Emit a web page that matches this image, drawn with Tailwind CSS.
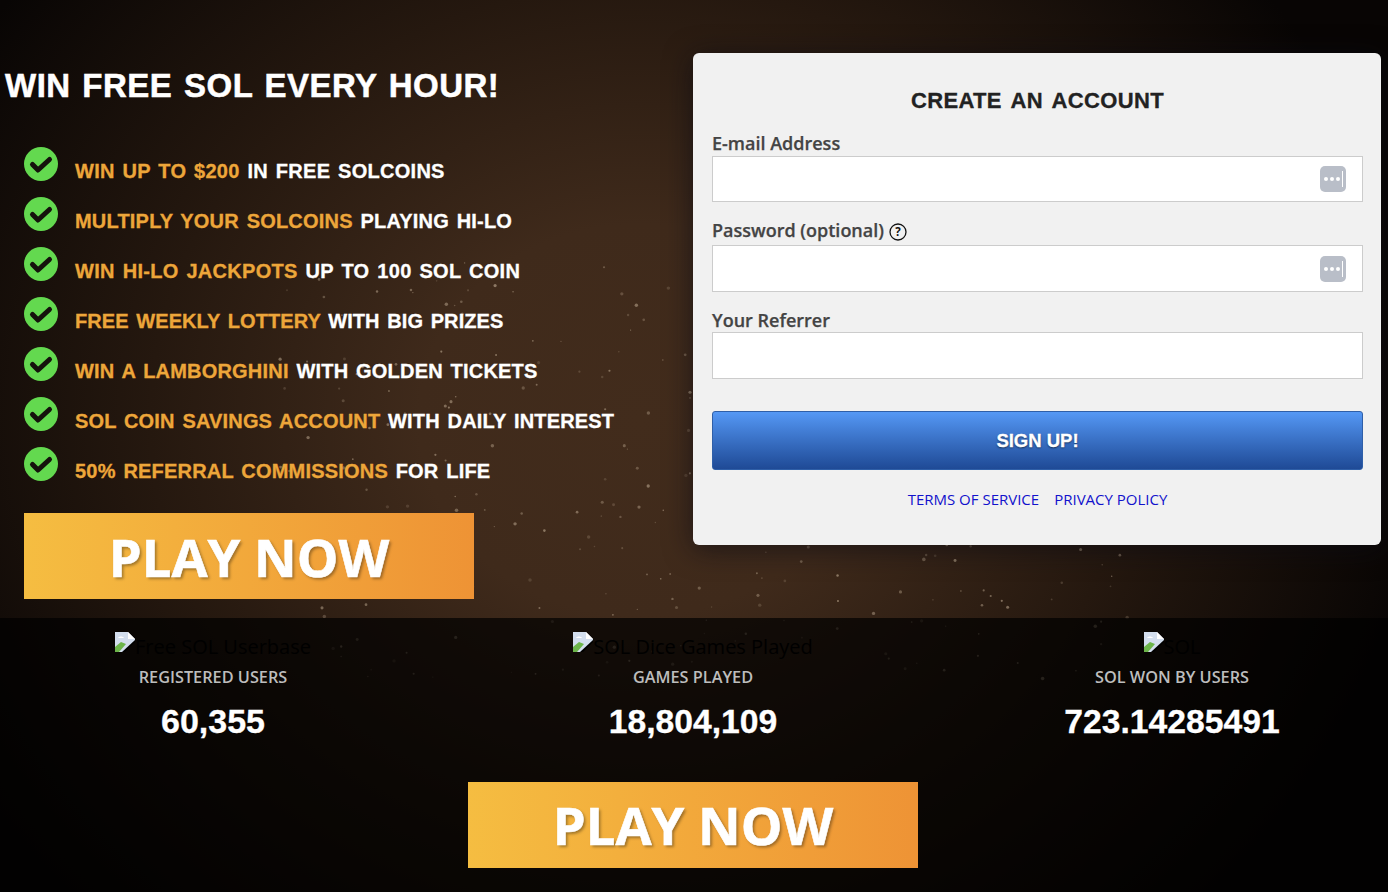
<!DOCTYPE html>
<html lang="en">
  <head>
    <meta charset="UTF-8">
    <title>Win Free SOL</title>
    <script src="https://cdn.jsdelivr.net/npm/@tailwindcss/browser@4"></script>
  </head>
  <body class="bg-black">
    <div class="relative w-[1388px] h-[892px] overflow-hidden bg-[radial-gradient(ellipse_790px_700px_at_640px_420px,#422c1c_0%,#3f2a1b_28%,#25180f_62%,#080504_100%)] font-['Open_Sans',sans-serif]">
      <!-- dust specks -->
      <svg id="specks" class="absolute inset-0" width="1388" height="892"></svg>

      <!-- hero -->
      <section class="relative h-[618px] flex">
        <div class="w-[693px] shrink-0">
          <h1 class="pl-[5px] pt-[66px] text-[33px] leading-[40px] font-bold text-white font-['Liberation_Sans',sans-serif] tracking-[0.5px] [word-spacing:2px] [-webkit-text-stroke:0.5px_white]">WIN FREE SOL EVERY HOUR!</h1>

          <ul class="pl-6 pt-[41px] flex flex-col gap-[16px] font-['Liberation_Sans',sans-serif] text-[20px] font-bold text-white tracking-[0.2px] [word-spacing:2px] [-webkit-text-stroke:0.3px]">
            <li class="flex h-[34px] gap-[17px]">
              <svg class="shrink-0" width="34" height="34" viewBox="0 0 34 34"><circle cx="17" cy="17" r="17" fill="#63d94f"/><path d="M8.5 17.5l5.5 5.5 11.5-10.5" fill="none" stroke="#15120d" stroke-width="5" stroke-linecap="round" stroke-linejoin="round"/></svg>
              <span class="pt-[11px] leading-[26px] whitespace-nowrap tracking-[0.27px]"><span class="text-[#eda63a]">WIN UP TO $200</span> IN FREE SOLCOINS</span>
            </li>
            <li class="flex h-[34px] gap-[17px]">
              <svg class="shrink-0" width="34" height="34" viewBox="0 0 34 34"><circle cx="17" cy="17" r="17" fill="#63d94f"/><path d="M8.5 17.5l5.5 5.5 11.5-10.5" fill="none" stroke="#15120d" stroke-width="5" stroke-linecap="round" stroke-linejoin="round"/></svg>
              <span class="pt-[11px] leading-[26px] whitespace-nowrap"><span class="text-[#eda63a]">MULTIPLY YOUR SOLCOINS</span> PLAYING HI-LO</span>
            </li>
            <li class="flex h-[34px] gap-[17px]">
              <svg class="shrink-0" width="34" height="34" viewBox="0 0 34 34"><circle cx="17" cy="17" r="17" fill="#63d94f"/><path d="M8.5 17.5l5.5 5.5 11.5-10.5" fill="none" stroke="#15120d" stroke-width="5" stroke-linecap="round" stroke-linejoin="round"/></svg>
              <span class="pt-[11px] leading-[26px] whitespace-nowrap tracking-[0.3px]"><span class="text-[#eda63a]">WIN HI-LO JACKPOTS</span> UP TO 100 SOL COIN</span>
            </li>
            <li class="flex h-[34px] gap-[17px]">
              <svg class="shrink-0" width="34" height="34" viewBox="0 0 34 34"><circle cx="17" cy="17" r="17" fill="#63d94f"/><path d="M8.5 17.5l5.5 5.5 11.5-10.5" fill="none" stroke="#15120d" stroke-width="5" stroke-linecap="round" stroke-linejoin="round"/></svg>
              <span class="pt-[11px] leading-[26px] whitespace-nowrap tracking-[0.08px]"><span class="text-[#eda63a]">FREE WEEKLY LOTTERY</span> WITH BIG PRIZES</span>
            </li>
            <li class="flex h-[34px] gap-[17px]">
              <svg class="shrink-0" width="34" height="34" viewBox="0 0 34 34"><circle cx="17" cy="17" r="17" fill="#63d94f"/><path d="M8.5 17.5l5.5 5.5 11.5-10.5" fill="none" stroke="#15120d" stroke-width="5" stroke-linecap="round" stroke-linejoin="round"/></svg>
              <span class="pt-[11px] leading-[26px] whitespace-nowrap"><span class="text-[#eda63a]">WIN A LAMBORGHINI</span> WITH GOLDEN TICKETS</span>
            </li>
            <li class="flex h-[34px] gap-[17px]">
              <svg class="shrink-0" width="34" height="34" viewBox="0 0 34 34"><circle cx="17" cy="17" r="17" fill="#63d94f"/><path d="M8.5 17.5l5.5 5.5 11.5-10.5" fill="none" stroke="#15120d" stroke-width="5" stroke-linecap="round" stroke-linejoin="round"/></svg>
              <span class="pt-[11px] leading-[26px] whitespace-nowrap tracking-[0.17px]"><span class="text-[#eda63a]">SOL COIN SAVINGS ACCOUNT</span> WITH DAILY INTEREST</span>
            </li>
            <li class="flex h-[34px] gap-[17px]">
              <svg class="shrink-0" width="34" height="34" viewBox="0 0 34 34"><circle cx="17" cy="17" r="17" fill="#63d94f"/><path d="M8.5 17.5l5.5 5.5 11.5-10.5" fill="none" stroke="#15120d" stroke-width="5" stroke-linecap="round" stroke-linejoin="round"/></svg>
              <span class="pt-[11px] leading-[26px] whitespace-nowrap"><span class="text-[#eda63a]">50% REFERRAL COMMISSIONS</span> FOR LIFE</span>
            </li>
          </ul>

          <a href="#" class="ml-6 mt-[32px] w-[450px] h-[86px] pt-[2px] flex items-center justify-center bg-gradient-to-r from-[#f5bd41] to-[#ee9335] text-white font-bold text-[52.5px] [-webkit-text-stroke:0.6px_white] [text-shadow:2px_2px_3px_rgba(0,0,0,0.35)]">PLAY NOW</a>
        </div>

        <!-- sign up card -->
        <div class="mt-[53px] w-[688px] h-[492px] bg-[#f1f1f1] rounded-md shadow-[0_4px_28px_rgba(10,10,20,0.65)] pl-[19px] pr-[18px] pt-[34px]">
          <h2 class="text-center text-[22px] leading-[28px] font-bold text-[#222] font-['Liberation_Sans',sans-serif] tracking-[0.35px] [word-spacing:3px] [-webkit-text-stroke:0.3px_#222]">CREATE AN ACCOUNT</h2>

          <label class="block mt-[16px] text-[18px] leading-[24px] font-semibold text-[#444] [-webkit-text-stroke:0.25px_#444]">E-mail Address</label>
          <div class="mt-[1px] h-[46px] bg-white border border-[#cccccc] flex items-center justify-end pr-[16px]">
            <span class="w-[26px] h-[26px] rounded-[5px] bg-[#b9bec8] flex items-center justify-center gap-[2px] pl-[1px]">
              <i class="w-[4px] h-[4px] rounded-full bg-white"></i><i class="w-[4px] h-[4px] rounded-full bg-white"></i><i class="w-[4px] h-[4px] rounded-full bg-white"></i><i class="w-[1px] h-[16px] bg-white"></i>
            </span>
          </div>

          <label class="flex items-center gap-[5px] mt-[16px] text-[18px] leading-[25px] font-semibold text-[#444] [-webkit-text-stroke:0.25px_#444]">Password (optional)
            <svg class="mt-[3px]" width="18" height="18" viewBox="0 0 18 18"><circle cx="9" cy="9" r="8" fill="none" stroke="#111" stroke-width="1.3"/><text x="9" y="13" text-anchor="middle" font-size="11.5" font-weight="700" fill="#111" font-family="Open Sans">?</text></svg>
          </label>
          <div class="mt-[2px] h-[47px] bg-white border border-[#cccccc] flex items-center justify-end pr-[16px]">
            <span class="w-[26px] h-[26px] rounded-[5px] bg-[#b9bec8] flex items-center justify-center gap-[2px] pl-[1px]">
              <i class="w-[4px] h-[4px] rounded-full bg-white"></i><i class="w-[4px] h-[4px] rounded-full bg-white"></i><i class="w-[4px] h-[4px] rounded-full bg-white"></i><i class="w-[1px] h-[16px] bg-white"></i>
            </span>
          </div>

          <label class="block mt-[17px] text-[18px] leading-[23px] font-semibold text-[#444] [-webkit-text-stroke:0.25px_#444]">Your Referrer</label>
          <div class="h-[47px] bg-white border border-[#cccccc]"></div>

          <button class="mt-[32px] w-full h-[59px] rounded-[3px] border border-[#2f5fa8] bg-gradient-to-b from-[#5598f5] to-[#1f4a96] text-white font-bold text-[18.5px] font-['Liberation_Sans',sans-serif] [-webkit-text-stroke:0.3px_white] [text-shadow:0_1px_2px_rgba(0,0,0,0.6)]">SIGN UP!</button>

          <div class="mt-[19px] flex justify-center gap-[15px] text-[15px] leading-[20px] text-[#1212cc]">
            <a href="#">TERMS OF SERVICE</a>
            <a href="#">PRIVACY POLICY</a>
          </div>
        </div>
      </section>

      <!-- stats -->
      <section class="relative h-[274px] bg-black/70">
        <div class="grid grid-cols-[426px_534px_424px] text-center">
          <div class="pt-[14px]">
            <div class="flex justify-center h-[30px] text-[20px] leading-[30px] text-black">
              <svg class="shrink-0" width="20" height="20" viewBox="0 0 20 20"><path d="M0 0h13l7 7v2L9 20H0z" fill="#d3deee"/><path d="M13 0l7 7h-7z" fill="#fff"/><path d="M0 15l6-5 5 2-7 8H0z" fill="#6cb54a"/><path d="M3 6c1-2 5-2 6 0z" fill="#fff"/><path d="M7 20L20 8v2L10 20z" fill="#000"/></svg>
              <span>Free SOL Userbase</span>
            </div>
            <p class="mt-[3px] text-[16.3px] leading-[24px] font-semibold text-[#bdbdbd]">REGISTERED USERS</p>
            <p class="mt-[12px] text-[34px] leading-[40px] font-bold text-white font-['Liberation_Sans',sans-serif] [-webkit-text-stroke:0.3px_white]">60,355</p>
          </div>
          <div class="pt-[14px]">
            <div class="flex justify-center h-[30px] text-[20px] leading-[30px] text-black">
              <svg class="shrink-0" width="20" height="20" viewBox="0 0 20 20"><path d="M0 0h13l7 7v2L9 20H0z" fill="#d3deee"/><path d="M13 0l7 7h-7z" fill="#fff"/><path d="M0 15l6-5 5 2-7 8H0z" fill="#6cb54a"/><path d="M3 6c1-2 5-2 6 0z" fill="#fff"/><path d="M7 20L20 8v2L10 20z" fill="#000"/></svg>
              <span>SOL Dice Games Played</span>
            </div>
            <p class="mt-[3px] text-[16.3px] leading-[24px] font-semibold text-[#bdbdbd]">GAMES PLAYED</p>
            <p class="mt-[12px] text-[33.7px] leading-[40px] font-bold text-white font-['Liberation_Sans',sans-serif] [-webkit-text-stroke:0.3px_white]">18,804,109</p>
          </div>
          <div class="pt-[14px]">
            <div class="flex justify-center h-[30px] text-[20px] leading-[30px] text-black">
              <svg class="shrink-0" width="20" height="20" viewBox="0 0 20 20"><path d="M0 0h13l7 7v2L9 20H0z" fill="#d3deee"/><path d="M13 0l7 7h-7z" fill="#fff"/><path d="M0 15l6-5 5 2-7 8H0z" fill="#6cb54a"/><path d="M3 6c1-2 5-2 6 0z" fill="#fff"/><path d="M7 20L20 8v2L10 20z" fill="#000"/></svg>
              <span>SOL</span>
            </div>
            <p class="mt-[3px] text-[16.3px] leading-[24px] font-semibold text-[#bdbdbd]">SOL WON BY USERS</p>
            <p class="mt-[12px] text-[33.7px] leading-[40px] font-bold text-white font-['Liberation_Sans',sans-serif] [-webkit-text-stroke:0.3px_white]">723.14285491</p>
          </div>
        </div>

        <a href="#" class="ml-[468px] mt-[41px] w-[450px] h-[86px] flex items-center justify-center bg-gradient-to-r from-[#f5bd41] to-[#ee9335] text-white font-bold text-[52.5px] [-webkit-text-stroke:0.6px_white] [text-shadow:2px_2px_3px_rgba(0,0,0,0.35)]">PLAY NOW</a>
      </section>
    </div>

    <script>
      // Scatter faint dust over the background, seeded so every render is the same
      const specks = document.getElementById("specks");
      let seed = 17;
      const rnd = () => (seed = (seed * 16807) % 2147483647) / 2147483647;
      for (let i = 0; i < 320; i++) {
        const c = document.createElementNS("http://www.w3.org/2000/svg", "circle");
        c.setAttribute("cx", 280 + rnd() * 850);
        c.setAttribute("cy", 260 + rnd() * 420);
        c.setAttribute("r", 0.6 + rnd() * 1.2);
        c.setAttribute("fill", "#b8a48c");
        c.setAttribute("opacity", 0.2 + rnd() * 0.45);
        specks.appendChild(c);
      }
    </script>
  </body>
</html>
